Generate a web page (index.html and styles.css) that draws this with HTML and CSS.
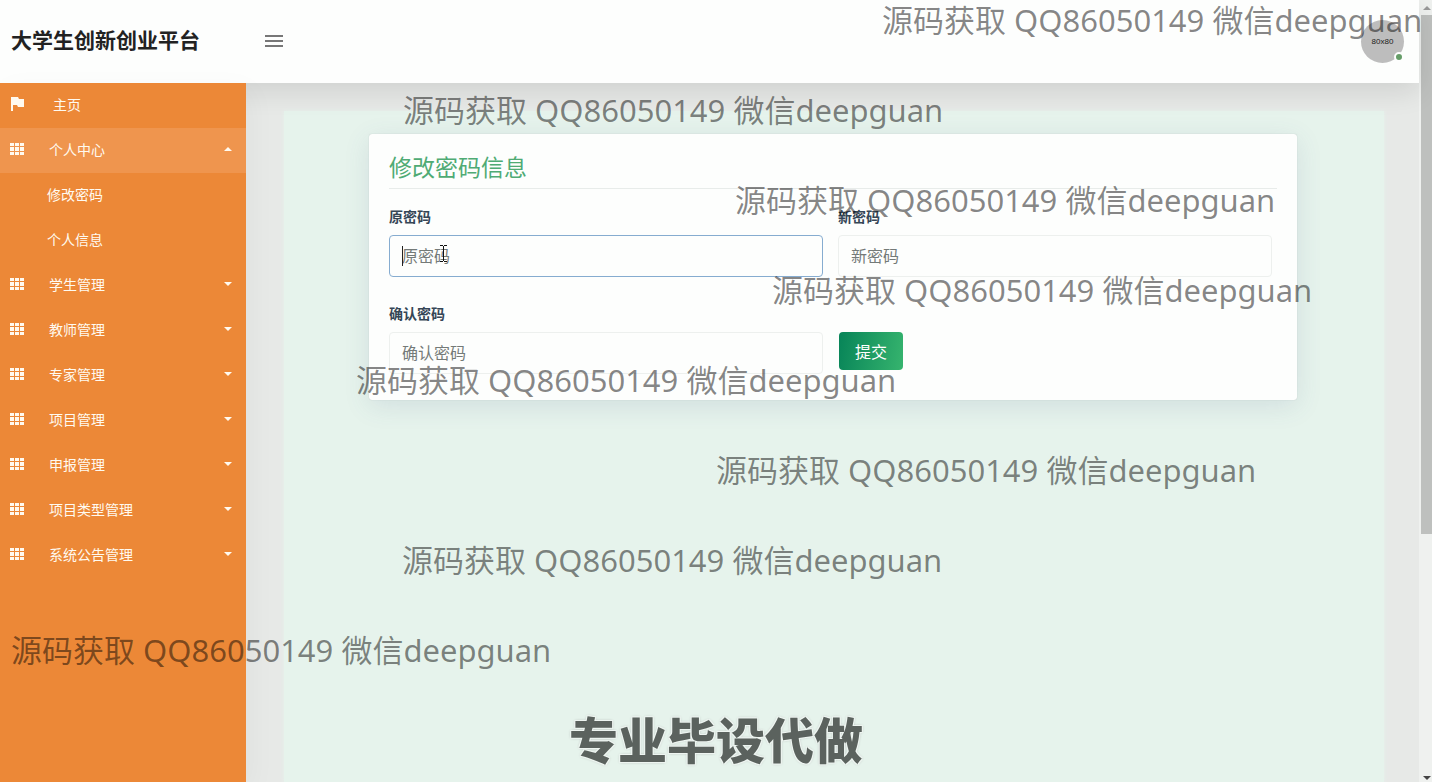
FILE: index.html
```html
<!DOCTYPE html>
<html lang="zh-CN">
<head>
<meta charset="utf-8">
<title>大学生创新创业平台</title>
<link rel="stylesheet" href="styles.css">
</head>
<body>
<svg class="defs" aria-hidden="true">
  <symbol id="grid" viewBox="0 0 14 12">
    <path d="M0 0h4v3H0zM5 0h4v3H5zM10 0h4v3h-4zM0 4h4v4H0zM5 4h4v4H5zM10 4h4v4h-4zM0 9h4v3H0zM5 9h4v3H5zM10 9h4v3h-4z"/>
  </symbol>
</svg>
<div class="viewport">
  <div class="page">
    <header class="header">
      <h1 class="brand">大学生创新创业平台</h1>
      <button class="toggle" type="button" aria-label="菜单">
        <svg width="20" height="12" viewBox="0 0 20 12"><path d="M1 0h18v2H1zM1 5h18v2H1zM1 10h18v2H1z"/></svg>
      </button>
      <div class="avatar">80x80<span class="status"></span></div>
    </header>
    <div class="body">
      <nav class="sidebar">
        <a class="item home" href="#"><svg class="icon" viewBox="0 0 14 14"><path d="M1 0h7l1 2h5v8H8L7 8H3v6H1z"/></svg><span>主页</span></a>
        <a class="item active" href="#"><svg class="icon"><use href="#grid"/></svg><span>个人中心</span><i class="caret up"></i></a>
        <a class="item sub" href="#">修改密码</a>
        <a class="item sub" href="#">个人信息</a>
        <a class="item" href="#"><svg class="icon"><use href="#grid"/></svg><span>学生管理</span><i class="caret"></i></a>
        <a class="item" href="#"><svg class="icon"><use href="#grid"/></svg><span>教师管理</span><i class="caret"></i></a>
        <a class="item" href="#"><svg class="icon"><use href="#grid"/></svg><span>专家管理</span><i class="caret"></i></a>
        <a class="item" href="#"><svg class="icon"><use href="#grid"/></svg><span>项目管理</span><i class="caret"></i></a>
        <a class="item" href="#"><svg class="icon"><use href="#grid"/></svg><span>申报管理</span><i class="caret"></i></a>
        <a class="item" href="#"><svg class="icon"><use href="#grid"/></svg><span>项目类型管理</span><i class="caret"></i></a>
        <a class="item" href="#"><svg class="icon"><use href="#grid"/></svg><span>系统公告管理</span><i class="caret"></i></a>
      </nav>
      <main class="main">
        <div class="content">
          <section class="card">
            <h2 class="title">修改密码信息</h2>
            <form class="form">
              <div class="field">
                <label for="old">原密码</label>
                <div class="control">
                  <input class="focused" id="old" type="text" placeholder="原密码">
                  <span class="text-caret"></span>
                  <svg class="pointer" width="7" height="17" viewBox="0 0 7 17"><path d="M0 .5h3M4 .5h3M3.500 1v15M0 16.500h3M4 16.500h3"/></svg>
                </div>
              </div>
              <div class="field">
                <label for="new">新密码</label>
                <input id="new" type="text" placeholder="新密码">
              </div>
              <div class="field">
                <label for="confirm">确认密码</label>
                <input id="confirm" type="text" placeholder="确认密码">
              </div>
              <div class="field submit-cell"><button class="submit" type="button">提交</button></div>
            </form>
          </section>
        </div>
      </main>
    </div>
  </div>
  <div class="scrollbar">
    <svg class="arrow" viewBox="0 0 8 4"><path d="M0 4l4-4 4 4z"/></svg>
    <div class="thumb"></div>
    <svg class="arrow down" viewBox="0 0 8 4"><path d="M0 0h8L4 4z"/></svg>
  </div>
  <div class="marks">
    <p class="m1">源码获取 QQ86050149 微信deepguan</p>
    <p class="m2">源码获取 QQ86050149 微信deepguan</p>
    <p class="m3">源码获取 QQ86050149 微信deepguan</p>
    <p class="m4">源码获取 QQ86050149 微信deepguan</p>
    <p class="m5">源码获取 QQ86050149 微信deepguan</p>
    <p class="m6">源码获取 QQ86050149 微信deepguan</p>
    <p class="m7">源码获取 QQ86050149 微信deepguan</p>
    <p class="m8">源码获取 QQ86050149 微信deepguan</p>
  </div>
  <p class="caption">专业毕设代做</p>
</div>
</body>
</html>
```
FILE: styles.css
```css
* { box-sizing: border-box; }
body {
  margin: 0;
  font-family: "Open Sans", "Noto Sans CJK SC", sans-serif;
  font-size: 14px;
  color: #222;
}
h1, h2, p { margin: 0; }
.defs { position: absolute; width: 0; height: 0; }
.viewport { position: relative; display: flex; height: 100vh; overflow: hidden; }
.page { flex: 1; display: flex; flex-direction: column; min-width: 0; }

.header {
  position: relative;
  z-index: 1;
  display: flex;
  align-items: center;
  height: 83px;
  padding: 0 15px 1px 11px;
  background: #fdfefd;
  box-shadow: 0 8px 28px rgba(0, 0, 0, 0.11);
}
.brand { width: 253px; padding-bottom: 3px; font-size: 21px; line-height: 30px; font-weight: 700; }
.toggle { display: flex; padding: 0; border: 0; background: none; fill: #777; }
.avatar {
  position: relative;
  width: 43px;
  height: 43px;
  margin-left: auto;
  border-radius: 50%;
  background: #bdbdbd;
  font: 8px/43px "Liberation Sans", sans-serif;
  text-align: center;
}
.status {
  position: absolute;
  right: 0;
  bottom: 1px;
  width: 10px;
  height: 10px;
  border: 2px solid #fdfefd;
  border-radius: 50%;
  background: #659d68;
}

.body { flex: 1; display: flex; min-height: 0; }
.sidebar {
  position: relative;
  z-index: 2;
  width: 246px;
  flex: none;
  background: #ec8837;
  box-shadow: 4px 8px 28px rgba(0, 0, 0, 0.04);
}
.item {
  display: flex;
  align-items: center;
  height: 45px;
  padding: 0 14px 3px 10px;
  color: #fffaf0;
  font-weight: 400;
  text-decoration: none;
}
.icon { width: 14px; height: 12px; margin-right: 25px; fill: #fffaf0; }
.home .icon { height: 14px; margin-right: 29px; }
.active { background: #ef954e; }
.sub { padding-left: 47px; }
.caret {
  margin-left: auto;
  border: 4px solid transparent;
  border-top-color: #fffaf0;
  border-bottom: 0;
}
.caret.up { border-top: 0; border-bottom: 4px solid #fffaf0; }

.main { flex: 1; padding: 28px 35px 0 38px; background: #e7e9e7; }
.content {
  height: 100%;
  padding: 23px 87px 0 85px;
  background: #e6f3ec;
  box-shadow: 0 0 4px #e6f3ec;
}
.card {
  padding: 19px 20px 26px;
  border-radius: 3px;
  background: #fdfefd;
  box-shadow: 0 0 1px #a9b8b5, 0 6px 26px rgba(70, 90, 140, 0.13);
}
.title {
  padding-bottom: 6px;
  border-bottom: 1px solid #e8ecea;
  color: #4fab74;
  font-size: 23px;
  line-height: 29px;
  font-weight: 400;
}
.form {
  display: grid;
  grid-template-columns: 1fr 1fr;
  gap: 27px 15px;
  padding: 18px 5px 0 0;
}
.field label {
  display: block;
  margin-bottom: 8px;
  color: #354656;
  font-size: 14px;
  line-height: 20px;
  font-weight: 700;
}
.control { position: relative; }
.field input {
  display: block;
  width: 100%;
  height: 42px;
  padding: 0 12px;
  border: 1px solid #edf0ee;
  border-radius: 4px;
  background: transparent;
  font: inherit;
  font-size: 16px;
}
.field input::placeholder { color: #747a78; opacity: 1; }
.field input.focused { border-color: #86acd0; }
.text-caret { position: absolute; left: 13px; top: 11px; width: 1px; height: 20px; background: #222; }
.pointer { position: absolute; left: 51px; top: 10px; fill: none; stroke: #111; }
.submit-cell { padding-top: 28px; }
.submit {
  display: block;
  width: 64px;
  height: 38px;
  margin-left: 1px;
  padding: 0;
  border: 0;
  border-radius: 4px;
  background: linear-gradient(100deg, #078458, #36b46e);
  color: #fff;
  font: inherit;
  font-size: 16px;
}

.scrollbar {
  display: flex;
  flex-direction: column;
  align-items: center;
  width: 13px;
  padding: 6px 0 2px 2px;
  background: #eff1ef;
}
.arrow { width: 8px; height: 4px; fill: #999; }
.arrow.down { margin-top: auto; fill: #444; }
.thumb { width: 100%; height: 67%; margin-top: 5px; background: #bec0be; }

.marks {
  position: absolute;
  z-index: 3;
  inset: -25px 0 0;
  overflow: hidden;
  color: rgba(0, 0, 0, 0.48);
  font-family: "Noto Sans", "Noto Sans CJK SC", sans-serif;
  font-size: 31px;
  line-height: 90px;
  white-space: nowrap;
  pointer-events: none;
}
.m1 { padding-left: 882px; }
.m2 { padding-left: 403px; }
.m3 { padding-left: 735px; }
.m4 { padding-left: 772px; }
.m5 { padding-left: 356px; }
.m6 { padding-left: 716px; }
.m7 { padding-left: 402px; }
.m8 { padding-left: 11px; }
.caption {
  position: absolute;
  z-index: 3;
  left: 0;
  right: 0;
  bottom: 6px;
  color: #5b625e;
  font-size: 49px;
  line-height: 72px;
  font-weight: 900;
  text-align: center;
  text-shadow: -1px -1px #eef5f1, 1px -1px #eef5f1, -1px 1px #eef5f1, 1px 1px #eef5f1, 0 0 3px #999;
  pointer-events: none;
}
```
